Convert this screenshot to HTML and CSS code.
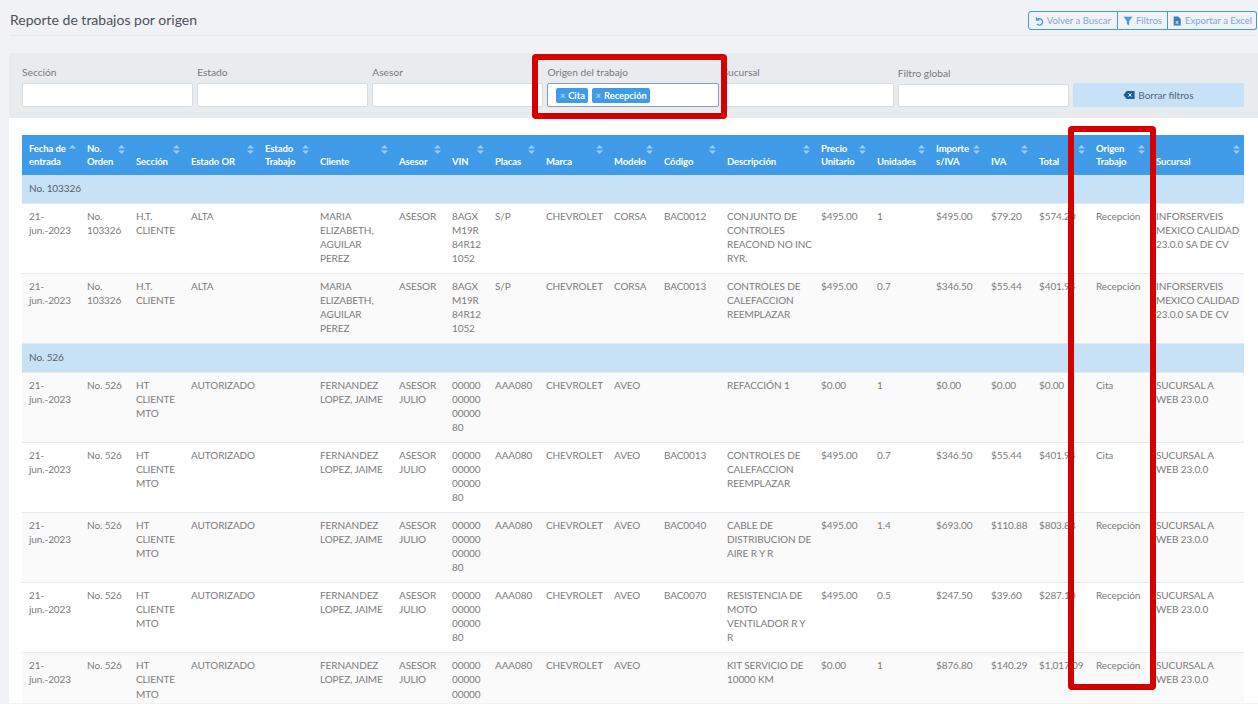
FILE: index.html
```html
<!DOCTYPE html>
<html lang="es">
<head>
<meta charset="utf-8">
<title>Reporte de trabajos por origen</title>
<link rel="stylesheet" href="styles.css">
</head>
<body>
<header class="topbar">
  <h1 class="title">Reporte de trabajos por origen</h1>
  <div class="btn-group">
    <button class="btn"><svg class="ico" viewBox="0 0 12 12"><path d="M3 1.500v3.500h3.500M3.200 5A3.900 3.900 0 1 1 3.400 9.500" fill="none" stroke="currentColor" stroke-width="1.500"/></svg>Volver a Buscar</button>
    <button class="btn"><svg class="ico" viewBox="0 0 12 12"><path d="M.5 1h11L7.400 6v5.500L4.600 9.500V6z" fill="#3f9ae8"/></svg>Filtros</button>
    <button class="btn"><svg class="ico" viewBox="0 0 12 12"><path d="M2 .5h5.500L10.500 3.500V11.500H2z" fill="#3a7fc4"/><path d="M4.500 6l3 3.500M7.500 6l-3 3.500" stroke="#fff" stroke-width="1"/></svg>Exportar a Excel</button>
  </div>
</header>
<main class="content">
  <section class="filters">
    <div class="field"><label>Sección</label><div class="input"></div></div>
    <div class="field"><label>Estado</label><div class="input"></div></div>
    <div class="field"><label>Asesor</label><div class="input"></div></div>
    <div class="field"><label>Origen del trabajo</label><div class="input input-focus"><span class="chip"><i>×</i>Cita</span><span class="chip"><i>×</i>Recepción</span></div></div>
    <div class="field"><label>Sucursal</label><div class="input"></div></div>
    <div class="field field-low"><label>Filtro global</label><div class="input"></div></div>
    <button class="clear"><svg class="ico-clear" viewBox="0 0 14 10"><path d="M4 0h10v10H4L0 5z" fill="#1f5f96"/><path d="M6.500 3l3.500 4M10 3L6.500 7" stroke="#fff" stroke-width="1.200"/></svg>Borrar filtros</button>
  </section>
  <div class="table-wrap">
  <table class="grid">
    <thead><tr>
      <th class="c1 sorted">Fecha de entrada</th><th class="c2">No. Orden</th><th class="c3">Sección</th><th class="c4">Estado OR</th><th class="c5">Estado Trabajo</th><th class="c6">Cliente</th><th class="c7">Asesor</th><th class="c8">VIN</th><th class="c9">Placas</th><th class="c10">Marca</th><th class="c11">Modelo</th><th class="c12">Código</th><th class="c13">Descripción</th><th class="c14">Precio Unitario</th><th class="c15">Unidades</th><th class="c16">Importe s/IVA</th><th class="c17">IVA</th><th class="c18">Total</th><th class="c19">Origen Trabajo</th><th class="c20">Sucursal</th>
    </tr></thead>
    <tbody>
      <tr class="group"><td colspan="20">No. 103326</td></tr>
      <tr><td>21-<br>jun.-2023</td><td>No.<br>103326</td><td>H.T.<br>CLIENTE</td><td>ALTA</td><td></td><td>MARIA<br>ELIZABETH,<br>AGUILAR<br>PEREZ</td><td>ASESOR</td><td>8AGX<br>M19R<br>84R12<br>1052</td><td>S/P</td><td>CHEVROLET</td><td>CORSA</td><td>BAC0012</td><td>CONJUNTO DE<br>CONTROLES<br>REACOND NO INC<br>RYR.</td><td>$495.00</td><td>1</td><td>$495.00</td><td>$79.20</td><td>$574.20</td><td>Recepción</td><td>INFORSERVEIS<br>MEXICO CALIDAD<br>23.0.0 SA DE CV</td></tr>
      <tr><td>21-<br>jun.-2023</td><td>No.<br>103326</td><td>H.T.<br>CLIENTE</td><td>ALTA</td><td></td><td>MARIA<br>ELIZABETH,<br>AGUILAR<br>PEREZ</td><td>ASESOR</td><td>8AGX<br>M19R<br>84R12<br>1052</td><td>S/P</td><td>CHEVROLET</td><td>CORSA</td><td>BAC0013</td><td>CONTROLES DE<br>CALEFACCION<br>REEMPLAZAR</td><td>$495.00</td><td>0.7</td><td>$346.50</td><td>$55.44</td><td>$401.94</td><td>Recepción</td><td>INFORSERVEIS<br>MEXICO CALIDAD<br>23.0.0 SA DE CV</td></tr>
      <tr class="group"><td colspan="20">No. 526</td></tr>
      <tr><td>21-<br>jun.-2023</td><td>No. 526</td><td>HT<br>CLIENTE<br>MTO</td><td>AUTORIZADO</td><td></td><td>FERNANDEZ<br>LOPEZ, JAIME</td><td>ASESOR<br>JULIO</td><td>00000<br>00000<br>00000<br>80</td><td>AAA080</td><td>CHEVROLET</td><td>AVEO</td><td></td><td>REFACCIÓN 1</td><td>$0.00</td><td>1</td><td>$0.00</td><td>$0.00</td><td>$0.00</td><td>Cita</td><td>SUCURSAL A<br>WEB 23.0.0</td></tr>
      <tr><td>21-<br>jun.-2023</td><td>No. 526</td><td>HT<br>CLIENTE<br>MTO</td><td>AUTORIZADO</td><td></td><td>FERNANDEZ<br>LOPEZ, JAIME</td><td>ASESOR<br>JULIO</td><td>00000<br>00000<br>00000<br>80</td><td>AAA080</td><td>CHEVROLET</td><td>AVEO</td><td>BAC0013</td><td>CONTROLES DE<br>CALEFACCION<br>REEMPLAZAR</td><td>$495.00</td><td>0.7</td><td>$346.50</td><td>$55.44</td><td>$401.94</td><td>Cita</td><td>SUCURSAL A<br>WEB 23.0.0</td></tr>
      <tr><td>21-<br>jun.-2023</td><td>No. 526</td><td>HT<br>CLIENTE<br>MTO</td><td>AUTORIZADO</td><td></td><td>FERNANDEZ<br>LOPEZ, JAIME</td><td>ASESOR<br>JULIO</td><td>00000<br>00000<br>00000<br>80</td><td>AAA080</td><td>CHEVROLET</td><td>AVEO</td><td>BAC0040</td><td>CABLE DE<br>DISTRIBUCION DE<br>AIRE R Y R</td><td>$495.00</td><td>1.4</td><td>$693.00</td><td>$110.88</td><td>$803.88</td><td>Recepción</td><td>SUCURSAL A<br>WEB 23.0.0</td></tr>
      <tr><td>21-<br>jun.-2023</td><td>No. 526</td><td>HT<br>CLIENTE<br>MTO</td><td>AUTORIZADO</td><td></td><td>FERNANDEZ<br>LOPEZ, JAIME</td><td>ASESOR<br>JULIO</td><td>00000<br>00000<br>00000<br>80</td><td>AAA080</td><td>CHEVROLET</td><td>AVEO</td><td>BAC0070</td><td>RESISTENCIA DE<br>MOTO<br>VENTILADOR R Y<br>R</td><td>$495.00</td><td>0.5</td><td>$247.50</td><td>$39.60</td><td>$287.10</td><td>Recepción</td><td>SUCURSAL A<br>WEB 23.0.0</td></tr>
      <tr><td>21-<br>jun.-2023</td><td>No. 526</td><td>HT<br>CLIENTE<br>MTO</td><td>AUTORIZADO</td><td></td><td>FERNANDEZ<br>LOPEZ, JAIME</td><td>ASESOR<br>JULIO</td><td>00000<br>00000<br>00000</td><td>AAA080</td><td>CHEVROLET</td><td>AVEO</td><td></td><td>KIT SERVICIO DE<br>10000 KM</td><td>$0.00</td><td>1</td><td>$876.80</td><td>$140.29</td><td>$1,017.09</td><td>Recepción</td><td>SUCURSAL A<br>WEB 23.0.0</td></tr>
    </tbody>
  </table>
  </div>
</main>
<div class="mark mark-filter"></div>
<div class="mark mark-col"></div>
</body>
</html>
```
FILE: styles.css
```css
* { box-sizing: border-box; }
html, body { margin: 0; height: 704px; overflow: hidden; }
body { background: #f0f2f6; font-family: "Lato", "Noto Sans", sans-serif; font-size: 10px; letter-spacing: -0.1px; color: #7c7c7c; position: relative; }
.topbar { height: 36px; margin-left: 10px; display: flex; justify-content: space-between; align-items: flex-start; border-bottom: 1px solid #e5e7ea; padding-top: 11px; margin-right: 1px; }
.title { margin: 0; font-size: 14px; line-height: 18px; letter-spacing: 0; font-weight: 400; color: #4d5156; }
.btn-group { display: flex; height: 19px; }
.btn { display: flex; align-items: center; gap: 3px; height: 19px; padding: 0 5px; background: transparent; border: 1px solid #3f9ae8; border-left-width: 0; color: #7ba8d8; font: inherit; font-size: 9.5px; letter-spacing: 0; }
.btn:first-child { border-left-width: 1px; border-radius: 3px 0 0 3px; padding-right: 6px; }
.btn:last-child { border-radius: 0 3px 3px 0; padding: 0 4px; }
.ico { width: 10px; height: 10px; color: #3f9ae8; }
.content { margin: 17px 0 0 9px; background: #fff; height: 650px; overflow: hidden; }
.filters { height: 65px; background: #e9ecef; padding: 0 14px 11px 13px; display: grid; grid-template-columns: repeat(7, 1fr); column-gap: 4px; align-items: end; }
.field label { display: block; font-size: 10.2px; letter-spacing: 0; line-height: 14px; margin-bottom: 4px; color: #75797e; }
.input { height: 24px; background: #fff; border: 1px solid #d8dce2; border-radius: 2px; display: flex; align-items: center; gap: 4px; padding-left: 8px; }
.input-focus { border-color: #8d9db5; }
.field-low .input { height: 23px; }
.chip { display: inline-flex; align-items: center; height: 15px; padding: 0 3.5px; background: #3f9ae8; color: #fff; border-radius: 2px; font-size: 9.3px; letter-spacing: 0; font-weight: 700; }
.chip i { font-style: normal; font-weight: 400; margin-right: 3px; color: #cfe4f8; font-size: 9px; }
.clear { height: 24px; border: 0; border-radius: 2px; background: #c7e1f7; color: #56646f; font: inherit; font-size: 10px; letter-spacing: 0; display: flex; align-items: center; justify-content: center; gap: 3px; }
.ico-clear { width: 12px; height: 8px; }
.table-wrap { padding: 17px 14px 0 13px; }
.grid { width: 1222px; table-layout: fixed; border-collapse: collapse; }
.grid th { height: 40px; background: #3f9ae8; color: #fff; font-size: 9.5px; letter-spacing: -0.1px; font-weight: 700; line-height: 13px; text-align: left; vertical-align: bottom; padding: 0 8px 7px 7px; position: relative; }
.grid th::after { content: ""; position: absolute; right: 4px; top: 10px; width: 7px; height: 9px; background: #9ccbf3; clip-path: polygon(50% 0, 100% 40%, 0 40%, 50% 0, 50% 100%, 0 60%, 100% 60%, 50% 100%); }
.grid th.sorted::after { clip-path: polygon(50% 0, 100% 40%, 0 40%); }
.grid td { padding: 5px 7px 8px; line-height: 14.05px; vertical-align: top; border-bottom: 1px solid #e7e9ec; white-space: nowrap; background: #fff; }
.grid tr:nth-child(odd) td { background: #fafafa; }
.grid tr.group td { background: #c7e1f7; color: #5a6168; height: 28.4px; padding: 6px 7px; font-size: 10px; }
.c1 { width: 58px; } .c2 { width: 49px; } .c3 { width: 55px; } .c4 { width: 74px; } .c5 { width: 55px; }
.c6 { width: 79px; } .c7 { width: 53px; } .c8 { width: 43px; } .c9 { width: 51px; } .c10 { width: 68px; }
.c11 { width: 50px; } .c12 { width: 63px; } .c13 { width: 94px; } .c14 { width: 56px; } .c15 { width: 59px; }
.c16 { width: 55px; } .c17 { width: 48px; } .c18 { width: 57px; } .c19 { width: 60px; } .c20 { width: 95px; }
.mark { position: absolute; border: 6px solid #d50000; border-radius: 4px; }
.mark-filter { left: 532px; top: 54px; width: 195px; height: 65px; }
.mark-col { left: 1068px; top: 126px; width: 88px; height: 564px; }
```
